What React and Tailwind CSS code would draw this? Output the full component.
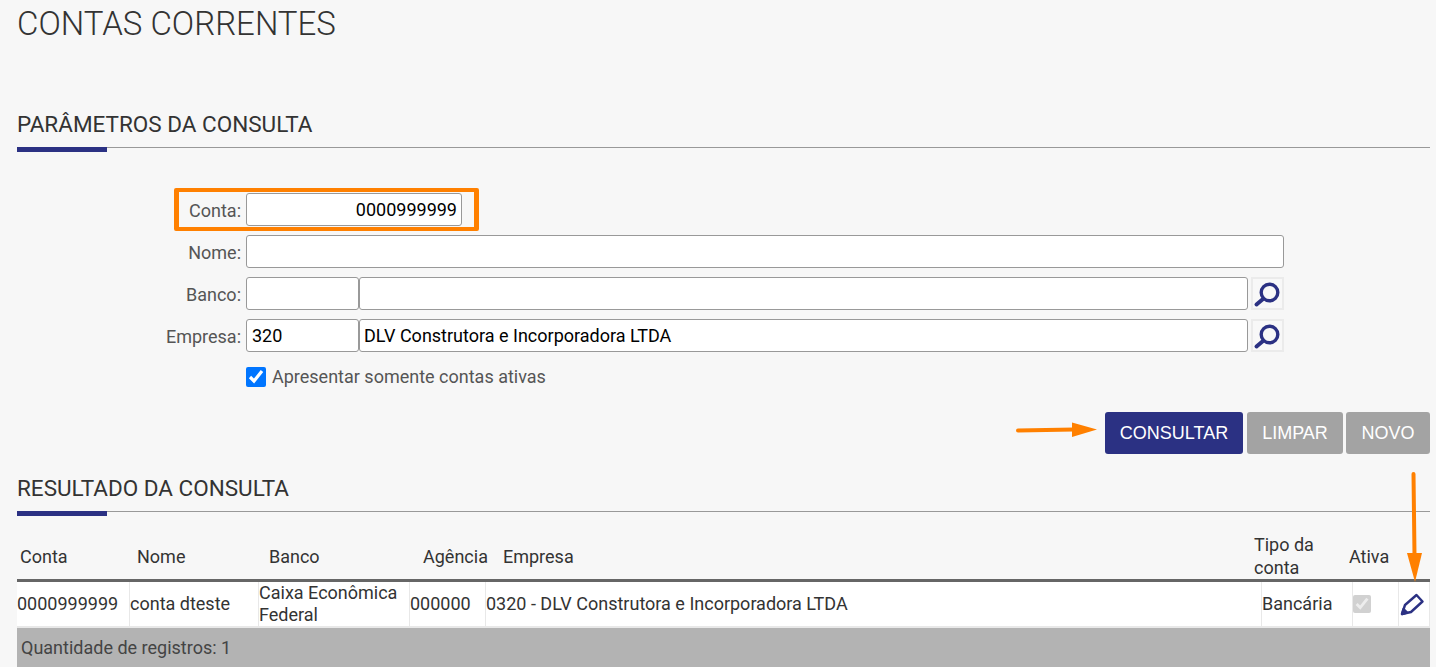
import React from "react";

const Field = ({ className = "", value = "", right = false }) => (
  <input
    readOnly
    value={value}
    className={`h-[33px] bg-white border border-[#999] rounded-[3px] text-[18px] text-black outline-none ${right ? "text-right pl-[5px] pr-[4px]" : "px-[5px]"} ${className}`}
  />
);

const Label = ({ children }) => (
  <label className="w-[229px] pr-[5px] pt-[2px] text-right text-[18px] text-[#555] shrink-0">{children}</label>
);

const Lupa = () => (
  <button className="ml-[3px] w-[33px] h-[33px] border-2 border-[#ebebeb] bg-[#f8f8f8] flex items-center justify-center shrink-0">
    <svg width="29" height="29" viewBox="2 2 29 29" fill="none" stroke="#2b3183">
      <circle cx="18.5" cy="15.5" r="8.3" strokeWidth="3.4" />
      <path d="M12 22 L5.5 27.5" strokeWidth="4" strokeLinecap="round" />
    </svg>
  </button>
);

const Heading = ({ children, className = "" }) => (
  <div className={className}>
    <h2 className="text-[22.5px] leading-[28px] text-[#333]">{children}</h2>
    <div className="relative mt-[9px] h-px bg-[#999]">
      <div className="absolute left-0 top-0 w-[90px] h-[5px] bg-[#2b3183]" />
    </div>
  </div>
);

const Btn = ({ children, className = "" }) => (
  <button className={`h-[42px] rounded-[3px] text-white text-[18px] font-['Liberation_Sans',Arial,sans-serif] ${className}`}>{children}</button>
);

const headCols = "grid grid-cols-[120px_132px_154px_80px_751px_95px_81px] h-[49px] items-end";
const rowCols = "grid grid-cols-[113px_129px_151px_76px_776px_91px_46px_31px] h-[45px] bg-white";
const cell = "border-r border-b-2 border-[#e8e8e8] flex items-center text-[18px] leading-[22px] text-[#333] min-w-0 whitespace-nowrap";
const headCenter = "self-center pt-[3px]";

export default function App() {
  return (
    <div className="relative w-[1436px] h-[667px] overflow-hidden bg-[#f7f7f7] pl-[17px] pr-[6px] font-['Roboto',sans-serif]">
      <h1 className="h-[48px] text-[33px] leading-[48px] font-light text-[#333]">CONTAS CORRENTES</h1>

      <Heading className="mt-[62px]">PARÂMETROS DA CONSULTA</Heading>

      <div className="mt-[45px] flex flex-col gap-[9px]">
        <div className="flex items-center">
          <Label>Conta:</Label>
          <Field className="w-[216px]" value="0000999999" right />
        </div>
        <div className="flex items-center">
          <Label>Nome:</Label>
          <Field className="w-[1038px]" />
        </div>
        <div className="flex items-center">
          <Label>Banco:</Label>
          <Field className="w-[113px]" />
          <Field className="w-[889px]" />
          <Lupa />
        </div>
        <div className="flex items-center">
          <Label>Empresa:</Label>
          <Field className="w-[113px]" value="320" />
          <Field className="w-[889px] !pl-[4px]" value="DLV Construtora e Incorporadora LTDA" />
          <Lupa />
        </div>
      </div>

      <label className="mt-[15px] ml-[229px] flex items-center gap-[6px] text-[18px] leading-[20px] text-[#555]">
        <input type="checkbox" defaultChecked className="w-5 h-5 m-0 accent-[#0075ff]" />
        Apresentar somente contas ativas
      </label>

      <div className="mt-[25px] flex justify-end">
        <Btn className="w-[138px] bg-[#2b3183]">CONSULTAR</Btn>
        <Btn className="ml-[4px] w-[96px] bg-[#a3a3a3]">LIMPAR</Btn>
        <Btn className="ml-[3px] w-[84px] bg-[#a3a3a3]">NOVO</Btn>
      </div>

      <Heading className="mt-[20px]">RESULTADO DA CONSULTA</Heading>

      <div className={`${headCols} mt-[18px] text-[18px] leading-[23px] text-[#333]`}>
        <div className={`pl-[3px] ${headCenter}`}>Conta</div>
        <div className={headCenter}>Nome</div>
        <div className={headCenter}>Banco</div>
        <div className={headCenter}>Agência</div>
        <div className={headCenter}>Empresa</div>
        <div>Tipo da<br />conta</div>
        <div className={headCenter}>Ativa</div>
      </div>
      <div className="h-[3px] bg-[#666]" />
      <div className={rowCols}>
        <div className={cell}>0000999999</div>
        <div className={cell}>conta dteste</div>
        <div className={cell}>Caixa Econômica<br />Federal</div>
        <div className={cell}>000000</div>
        <div className={cell}>0320 - DLV Construtora e Incorporadora LTDA</div>
        <div className={cell}>Bancária</div>
        <div className={cell}>
          <input type="checkbox" checked disabled readOnly className="w-[18px] h-[18px] m-0" />
        </div>
        <div className={`${cell} justify-center pr-[4px]`}>
          <svg width="24" height="24" viewBox="0 0 24 24" fill="none" stroke="#2b3183" strokeWidth="2.4" strokeLinejoin="round">
            <path d="M2 22 L5 13 L16.5 3 L22.5 9.5 L11 20 Z" />
            <path d="M2 22 L3.5 17 L7 20.5 Z" fill="#2b3183" />
          </svg>
        </div>
      </div>
      <div className="h-[40px] bg-[#b3b3b3] pl-[4px] flex items-center text-[18px] text-[#444]">Quantidade de registros: 1</div>

      <div className="absolute left-[174px] top-[188px] w-[305px] h-[43px] border-x-[5px] border-y-[4px] border-[#ff8000] rounded-[2px]" />
      <svg className="absolute left-[1016px] top-[420px]" width="84" height="20" viewBox="0 0 84 20">
        <path d="M2 10.5 L58 9.5" stroke="#ff8000" strokeWidth="4" strokeLinecap="round" />
        <path d="M56 2.5 L81 9.5 L56 17 Z" fill="#ff8000" />
      </svg>
      <svg className="absolute left-[1404px] top-[471px]" width="20" height="114" viewBox="0 0 20 114">
        <path d="M9.5 3 L10.5 84" stroke="#ff8000" strokeWidth="4" strokeLinecap="round" />
        <path d="M3 82 L18 82 L11 111 Z" fill="#ff8000" />
      </svg>
    </div>
  );
}
